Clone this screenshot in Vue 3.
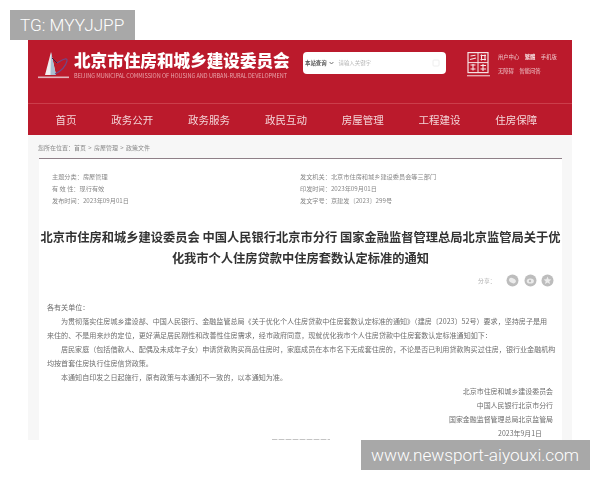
<script setup>
const nav = ['首页', '政务公开', '政务服务', '政民互动', '房屋管理', '工程建设', '住房保障']
const metaLeft = [
  ['主题分类：', '房屋管理'],
  ['有 效 性：', '现行有效'],
  ['发布时间：', '2023年09月01日']
]
const metaRight = [
  ['发文机关：', '北京市住房和城乡建设委员会等三部门'],
  ['印发时间：', '2023年09月01日'],
  ['发文字号：', '京建发〔2023〕299号']
]
const body = [
  { t: '各有关单位：', indent: false },
  { t: '为贯彻落实住房城乡建设部、中国人民银行、金融监管总局《关于优化个人住房贷款中住房套数认定标准的通知》（建房〔2023〕52号）要求，坚持房子是用', indent: true },
  { t: '来住的、不是用来炒的定位，更好满足居民刚性和改善性住房需求，经市政府同意，现就优化我市个人住房贷款中住房套数认定标准通知如下：', indent: false },
  { t: '居民家庭（包括借款人、配偶及未成年子女）申请贷款购买商品住房时，家庭成员在本市名下无成套住房的，不论是否已利用贷款购买过住房，银行业金融机构', indent: true },
  { t: '均按首套住房执行住房信贷政策。', indent: false },
  { t: '本通知自印发之日起施行，原有政策与本通知不一致的，以本通知为准。', indent: true }
]
const sign = ['北京市住房和城乡建设委员会', '中国人民银行北京市分行', '国家金融监督管理总局北京监管局']
</script>

<template>
  <div class="page">
    <div class="shot">
      <header class="top">
        <div class="brand">
          <svg class="logo" width="33" height="29" viewBox="0 0 33 29">
            <path d="M13 0 L7 23 L18 23 Z" fill="#f1eef0" />
            <path d="M13 0 L12.5 23 L18 23 Z" fill="#a9c0d2" />
            <path d="M19 11 Q30 4 29 9 Q27 17 17 22" fill="none" stroke="#6d4a8a" stroke-width="1.1" />
            <path d="M14 6 L19 11" stroke="#3a2040" stroke-width="1" />
            <rect x="0" y="24.5" width="31" height="1.6" fill="#e2b4bb" />
          </svg>
          <div class="brand-text">
            <div class="cn">北京市住房和城乡建设委员会</div>
            <div class="en">BEIJING MUNICIPAL COMMISSION OF HOUSING AND URBAN-RURAL DEVELOPMENT</div>
          </div>
        </div>
        <div class="search">
          <span class="scope">本站查询</span>
          <svg width="5" height="4" viewBox="0 0 5 4"><path d="M.6 1 L2.5 3 L4.4 1" fill="none" stroke="#666" stroke-width=".9" /></svg>
          <span class="hint">请输入关键字</span>
          <svg class="lens" width="8" height="8" viewBox="0 0 8 8"><rect x="1" y="1" width="6" height="6" rx="1" fill="none" stroke="#eee" /></svg>
        </div>
        <svg class="seal" width="24" height="26" viewBox="0 0 24 26">
          <rect x="1" y=".6" width="20" height="20" fill="#bd1a2c" stroke="#f5e3e5" stroke-width="1.2" />
          <path d="M1 10.6 H21 M11 .6 V20.6" stroke="#f5e3e5" stroke-width="1" />
          <path d="M3.5 4 L8.5 3.2 M3 7.5 L9 6 M13.5 3.5 H19 M13.5 7.5 H19 M14.5 2.5 V8.5 M18 2.5 V8.5 M3.5 13 H8.5 M3.5 17 H8.5 M6 12 V18.5 M13.5 13.5 H19 M13.5 17 H19 M16 12 V19" stroke="#f8e8ea" stroke-width="1.1" fill="none" />
          <rect x="0" y="23" width="23" height="1.4" fill="#e3a9b0" />
        </svg>
        <div class="links">
          <div class="link-row"><span>用户中心</span><b>繁體</b><span>手机版</span></div>
          <div class="link-row"><span>无障碍</span><span>智能问答</span></div>
        </div>
      </header>
      <nav class="nav">
        <a v-for="n in nav" :key="n">{{ n }}</a>
      </nav>
      <div class="sheet">
        <div class="crumb">您所在位置：首页 &gt; 房屋管理 &gt; 政策文件</div>
        <main class="panel">
          <section class="meta">
            <div class="meta-col">
              <div v-for="m in metaLeft" :key="m[0]">{{ m[0] }}{{ m[1] }}</div>
            </div>
            <div class="meta-col">
              <div v-for="m in metaRight" :key="m[0]">{{ m[0] }}{{ m[1] }}</div>
            </div>
          </section>
          <h1 class="title">北京市住房和城乡建设委员会 中国人民银行北京市分行 国家金融监督管理总局北京监管局关于优化我市个人住房贷款中住房套数认定标准的通知</h1>
          <div class="share">
            <span>分享：</span>
            <svg width="13" height="13" viewBox="0 0 13 13"><circle cx="6.5" cy="6.5" r="6" fill="#bdbdbd" /><ellipse cx="6.5" cy="6.6" rx="3.6" ry="2.4" fill="#ececec" transform="rotate(25 6.5 6.5)" /></svg>
            <svg width="13" height="13" viewBox="0 0 13 13"><circle cx="6.5" cy="6.5" r="6" fill="#bdbdbd" /><ellipse cx="6.3" cy="7" rx="3.6" ry="2.6" fill="#ececec" /><circle cx="6" cy="7" r="1.2" fill="#bdbdbd" /></svg>
            <svg width="13" height="13" viewBox="0 0 13 13"><circle cx="6.5" cy="6.5" r="6" fill="#bdbdbd" /><path d="M6.5 2.6 L7.6 5.2 L10.4 5.4 L8.3 7.2 L9 10 L6.5 8.5 L4 10 L4.7 7.2 L2.6 5.4 L5.4 5.2 Z" fill="#ececec" /></svg>
          </div>
          <article class="body">
            <p v-for="(b, i) in body" :key="i" :class="{ indent: b.indent }">{{ b.t }}</p>
          </article>
          <section class="sign">
            <p v-for="s in sign" :key="s">{{ s }}</p>
            <p class="date">2023年9月1日</p>
          </section>
          <div class="sliver"></div>
        </main>
      </div>
    </div>
    <div class="tag tag-tl">TG: MYYJJPP</div>
    <div class="tag tag-br">www.newsport-aiyouxi.com</div>
  </div>
</template>

<style>
html, body { margin: 0; background: #fff; }
</style>

<style scoped>
.page {
  position: relative;
  width: 600px;
  height: 480px;
  overflow: hidden;
  background: #fff;
  font-family: "Noto Sans CJK SC", "Liberation Sans", sans-serif;
  padding-top: 40px;
  box-sizing: border-box;
}
.shot {
  width: 544px;
  height: 400px;
  margin-left: 28px;
  overflow: hidden;
  background: #f7f7f7;
  filter: blur(0.4px);
}
.top {
  height: 63px;
  background: #bb1a2c;
  border-bottom: 1px solid #cb3e4b;
  display: flex;
  align-items: flex-start;
}
.brand {
  display: flex;
  width: 275px;
  padding-top: 10px;
}
.logo { margin-left: 10px; margin-top: 2px; flex: none; }
.brand-text { margin-left: 3px; }
.cn {
  font-size: 16.6px;
  line-height: 20px;
  font-weight: 900;
  color: #fff;
  white-space: nowrap;
}
.en {
  font-size: 5.55px;
  line-height: 6px;
  margin-top: 3px;
  color: #e8a4ab;
  white-space: nowrap;
}
.search {
  width: 143px;
  height: 22px;
  margin-top: 12px;
  background: #fff;
  border-radius: 4px;
  display: flex;
  align-items: center;
  padding-left: 2px;
  box-sizing: border-box;
  font-size: 5.4px;
}
.scope { font-weight: 700; color: #555; margin-right: 2px; }
.hint { color: #b5b5b5; margin-left: 5px; }
.lens { margin-left: auto; margin-right: 6px; }
.seal { margin-top: 12px; margin-left: 21px; flex: none; }
.links {
  margin-top: 10px;
  margin-left: 7px;
  color: #eec5c9;
  font-size: 5.3px;
  line-height: 14px;
}
.link-row { display: flex; gap: 5.5px; white-space: nowrap; }
.link-row b { color: #f6dfe1; }
.nav {
  height: 31px;
  background: #bb1a2c;
  display: flex;
  align-items: center;
  gap: 34.8px;
  padding-left: 27.5px;
  color: #f3d4d7;
  font-size: 10.5px;
  white-space: nowrap;
}
.sheet {
  height: 306px;
  padding: 0 10px 0 11px;
}
.crumb {
  height: 23px;
  line-height: 26px;
  font-size: 6px;
  word-spacing: 1px;
  color: #8a8a8a;
  white-space: nowrap;
  margin-left: -1px;
}
.panel {
  height: 290px;
  background: #fff;
  border-top: 1px solid #8f8088;
}
.meta {
  display: flex;
  padding: 12px 0 0 13px;
  height: 58px;
  box-sizing: border-box;
  font-size: 6.2px;
  line-height: 12px;
  color: #888;
  white-space: nowrap;
}
.meta-col:first-child { width: 248px; }
.title {
  margin: 10px 0 0;
  font-size: 12.25px;
  line-height: 21px;
  font-weight: 700;
  color: #333;
  text-align: center;
}
.share {
  display: flex;
  align-items: center;
  justify-content: flex-end;
  gap: 4.5px;
  height: 13px;
  margin-top: 5px;
  padding-right: 8px;
  font-size: 5.8px;
  color: #aaa;
}
.share span { margin-right: 6px; }
.body {
  margin-top: 13px;
  padding-left: 8px;
  font-size: 7.07px;
  line-height: 14px;
  color: #6e6e6e;
  white-space: nowrap;
}
.body p, .sign p { margin: 0; }
.body .indent { padding-left: 14px; }
.sign {
  padding-right: 9px;
  font-size: 6.95px;
  line-height: 14px;
  color: #6e6e6e;
  text-align: right;
}
.sign .date { padding-right: 11px; }
.sliver {
  width: 58px;
  height: 1.5px;
  margin: -1.5px auto 0;
  background: repeating-linear-gradient(90deg, #c4c4c4 0 5px, #e8e8e8 5px 7px);
}
.tag {
  position: absolute;
  background: #a8a8a8;
  color: #fff;
  font-family: "Roboto", "Liberation Sans", sans-serif;
  font-weight: 300;
  font-size: 17.2px;
  height: 30px;
  line-height: 30px;
  white-space: nowrap;
  box-sizing: border-box;
}
.tag-tl {
  left: 10px;
  top: 10px;
  width: 125px;
  padding-left: 10px;
}
.tag-br {
  left: 361px;
  top: 440px;
  width: 229px;
  padding-left: 10px;
}
</style>
